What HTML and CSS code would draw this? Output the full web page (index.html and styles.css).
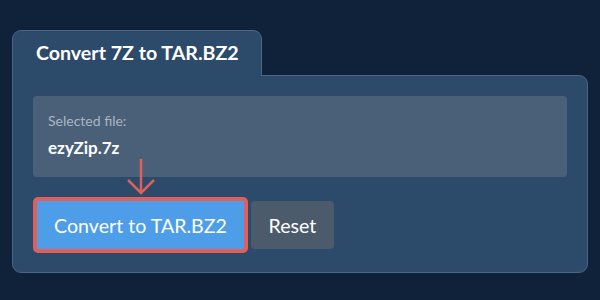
FILE: index.html
```html
<!DOCTYPE html>
<html lang="en">
<head>
    <meta charset="UTF-8">
    <meta name="viewport" content="width=device-width, initial-scale=1.0">
    <title>Convert 7Z to TAR.BZ2</title>
    <link rel="stylesheet" href="styles.css">
</head>
<body>
    <div class="container">
        <div class="tab">Convert 7Z to TAR.BZ2</div>
        <div class="panel">
            <div class="file-info">
                <div class="file-label">Selected file:</div>
                <div class="file-name">ezyZip.7z</div>
            </div>
            <div class="actions">
                <div class="highlight">
                    <svg class="arrow" xmlns="http://www.w3.org/2000/svg" viewBox="0 0 30 36" width="30" height="36">
                        <path d="M15 0 V34 M2 21 L15 34 L28 21" fill="none" stroke="var(--red)" stroke-width="2.5"/>
                    </svg>
                    <button class="btn btn-primary">Convert to TAR.BZ2</button>
                </div>
                <button class="btn btn-secondary">Reset</button>
            </div>
        </div>
    </div>
</body>
</html>
```

FILE: styles.css
```css
:root {
    --background: #0f2239;
    --surface: #2c4a6a;
    --border: #4a6585;
    --info: #4a6079;
    --primary: #4d9de8;
    --secondary: #4b5b6c;
    --red: #df5f5a;
    --text: #ffffff;
    --text-muted: #a9b5c3;
    --font-family: 'Lato', 'Noto Sans', sans-serif;
}
body {
    margin: 0;
    background-color: var(--background);
    font-family: var(--font-family);
    color: var(--text);
}
.container {
    padding: 30px 12px 0;
}
.tab {
    display: inline-flex;
    align-items: center;
    height: 46px;
    box-sizing: border-box;
    padding: 0 22px 2px 23px;
    background-color: var(--surface);
    border: 1px solid var(--border);
    border-bottom: none;
    border-radius: 9px 9px 0 0;
    font-size: 19.6px;
    font-weight: 700;
    position: relative;
    margin-bottom: -1px;
    z-index: 1;
}
.panel {
    background-color: var(--surface);
    border: 1px solid var(--border);
    border-radius: 0 9px 9px 9px;
    padding: 20px 20px 19px;
}
.file-info {
    background-color: var(--info);
    border-radius: 4px;
    padding: 16px 15px 19px;
}
.file-label {
    color: var(--text-muted);
    font-size: 14px;
    line-height: 18px;
}
.file-name {
    font-size: 17px;
    font-weight: 700;
    margin-top: 8px;
    line-height: 20px;
}
.actions {
    display: flex;
    align-items: center;
    gap: 3px;
    margin-top: 20px;
}
.highlight {
    position: relative;
    border: 4px solid var(--red);
    border-radius: 5px;
    display: flex;
}
.arrow {
    position: absolute;
    top: -42px;
    left: 50%;
    transform: translateX(-50%);
}
.btn {
    height: 48px;
    border: none;
    border-radius: 4px;
    color: var(--text);
    font-family: var(--font-family);
    font-size: 19.6px;
    cursor: pointer;
}
.btn-primary {
    background-color: var(--primary);
    border-radius: 0;
    width: 207px;
}
.btn-secondary {
    background-color: var(--secondary);
    width: 83px;
}
```
